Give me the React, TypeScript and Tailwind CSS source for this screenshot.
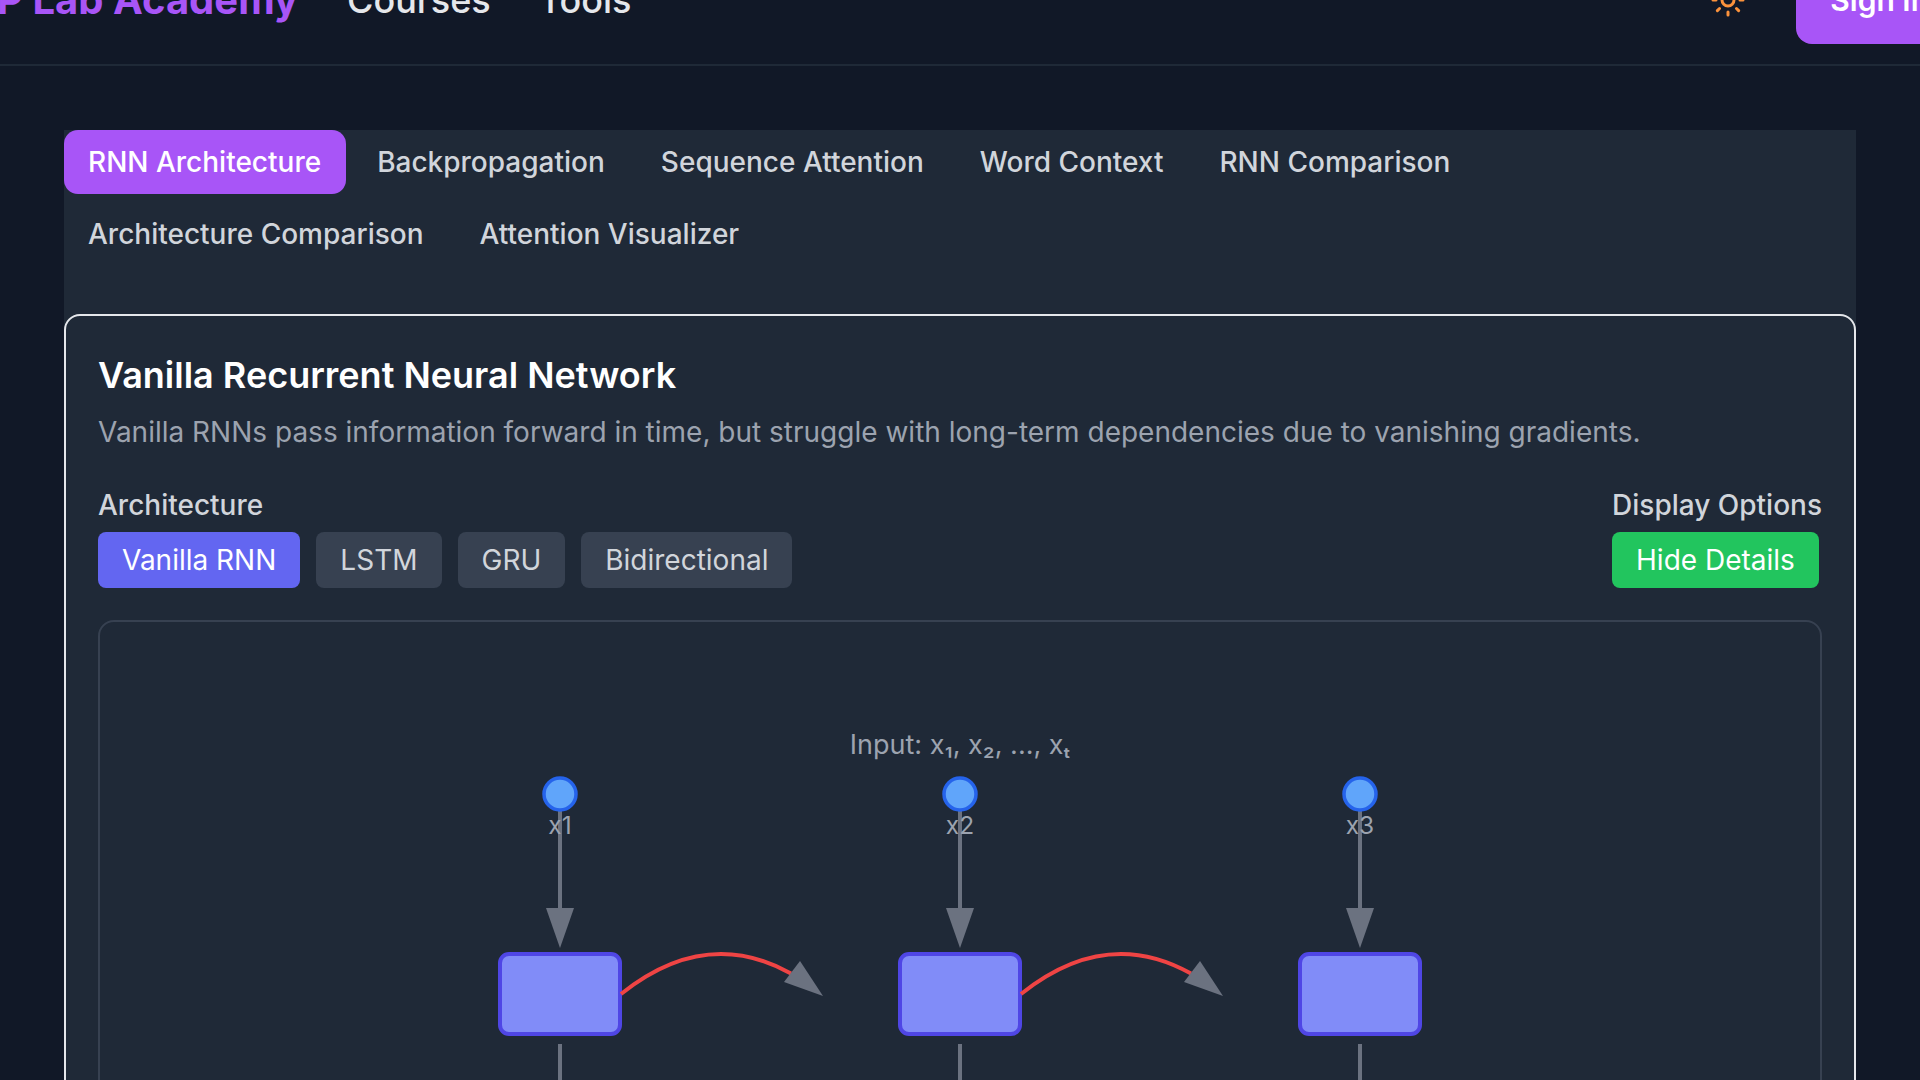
const tabsTop = ['RNN Architecture', 'Backpropagation', 'Sequence Attention', 'Word Context', 'RNN Comparison'];
const tabsBottom = ['Architecture Comparison', 'Attention Visualizer'];
const archs = ['LSTM', 'GRU', 'Bidirectional'];
const cells = [560, 960, 1360];

function Diagram() {
  return (
    <svg className="block w-full h-[600px]" viewBox="100 622 1720 600" fill="none">
      {cells.map((x, i) => (
        <g key={x}>
          <line x1={x} y1={811} x2={x} y2={910} stroke="#6b7280" strokeWidth="4" />
          <circle cx={x} cy={794} r={16} fill="#60a5fa" stroke="#2563eb" strokeWidth="3.5" />
          <text x={x} y={834} textAnchor="middle" fontSize="24.5" fill="#9ca3af">
            {'x' + (i + 1)}
          </text>
          <polygon points={`${x - 14},908 ${x + 14},908 ${x},948`} fill="#6b7280" />
          <rect x={x - 60} y={954} width={120} height={80} rx={9} fill="#818cf8" stroke="#4f46e5" strokeWidth="4" />
          <line x1={x} y1={1044} x2={x} y2={1100} stroke="#6b7280" strokeWidth="4" />
          {i < 2 && (
            <>
              <path d={`M${x + 61} 994Q${x + 146} 926 ${x + 231} 973.6`} stroke="#ef4444" strokeWidth="4" />
              <polygon
                points={`${x + 263},996 ${x + 240},961 ${x + 224},982`}
                fill="#6b7280"
              />
            </>
          )}
        </g>
      ))}
      <text x={960} y={754} textAnchor="middle" fontSize="27" fill="#9ca3af">
        Input: x₁, x₂, ..., xₜ
      </text>
    </svg>
  );
}

export default function App() {
  return (
    <div className="h-screen overflow-hidden bg-[#111827] font-['Inter',sans-serif]">
      {/* Header, scrolled off the top and wider than the window */}
      <header className="flex justify-between items-center h-[130px] -mt-[64px] w-[2120px] -ml-[100px] pl-[44px] pr-[57px] border-b-2 border-[#1f2937]">
        <div className="flex items-center">
          <span className="text-[40px] font-bold text-[#a855f7] leading-none">NLP Lab Academy</span>
          <nav className="flex gap-[48px] ml-[49px] text-[36px] font-medium text-[#e5e7eb]">
            <span>Courses</span>
            <span>Tools</span>
          </nav>
        </div>
        <div className="flex items-center gap-[50px]">
          <svg className="w-[36px] h-[36px]" viewBox="0 0 24 24" fill="none" stroke="#fb923c" strokeWidth="2" strokeLinecap="round">
            <circle cx="12" cy="12" r="4" />
            <path d="M12 2v2M12 20v2M4.93 4.93l1.41 1.41M17.66 17.66l1.41 1.41M2 12h2M20 12h2M6.34 17.66l-1.41 1.41M19.07 4.93l-1.41 1.41" />
          </svg>
          <button className="bg-[#a855f7] text-white text-[30px] font-semibold rounded-[16px] h-[88px] px-[34px]">Sign In</button>
        </div>
      </header>

      <main className="px-[64px] pt-[64px]">
        <div className="bg-[#1f2937]">
          <div className="flex flex-col gap-[8px] pb-[48px]">
            <div className="flex gap-[7px]">
              {tabsTop.map((t, i) => (
                <button
                  key={t}
                  className={
                    i === 0
                      ? 'h-[64px] pl-[24px] pr-[25px] rounded-[14px] text-[28px] font-medium bg-[#a855f7] text-white'
                      : 'h-[64px] pl-[24px] pr-[25px] rounded-[14px] text-[28px] font-medium text-[#d1d5db]'
                  }
                >
                  {t}
                </button>
              ))}
            </div>
            <div className="flex gap-[7px]">
              {tabsBottom.map((t) => (
                <button key={t} className="h-[64px] pl-[24px] pr-[25px] rounded-[14px] text-[28px] font-medium text-[#d1d5db]">
                  {t}
                </button>
              ))}
            </div>
          </div>

          <section className="border-2 border-[#e5e7eb] rounded-[16px] px-[32px] pt-[31px] pb-[32px]">
            <h2 className="text-[36px] font-semibold text-white leading-[56px]">Vanilla Recurrent Neural Network</h2>
            <p className="text-[28px] text-[#9ca3af] leading-[42px] mt-[8px]">
              Vanilla RNNs pass information forward in time, but struggle with long-term dependencies due to vanishing gradients.
            </p>
            <div className="flex justify-between mt-[32px]">
              <div>
                <div className="text-[28px] font-medium text-[#d1d5db] leading-[40px] mb-[7px]">Architecture</div>
                <div className="flex gap-[16px]">
                  <button className="h-[56px] px-[24px] rounded-[8px] text-[28px] bg-[#6366f1] text-white">Vanilla RNN</button>
                  {archs.map((a) => (
                    <button key={a} className="h-[56px] px-[24px] rounded-[8px] text-[28px] bg-[#374151] text-[#d1d5db]">
                      {a}
                    </button>
                  ))}
                </div>
              </div>
              <div>
                <div className="text-[28px] font-medium text-[#d1d5db] leading-[40px] mb-[7px]">Display Options</div>
                <button className="h-[56px] px-[24px] rounded-[8px] text-[28px] bg-[#22c55e] text-white">Hide Details</button>
              </div>
            </div>
            <div className="border-2 border-[#374151] rounded-[16px] mt-[32px] overflow-hidden">
              <Diagram />
            </div>
          </section>
        </div>
      </main>
    </div>
  );
}
